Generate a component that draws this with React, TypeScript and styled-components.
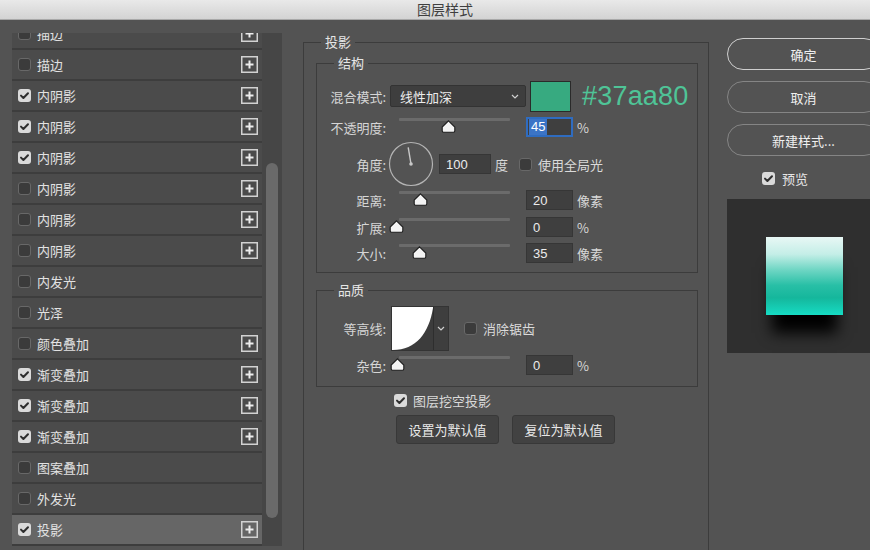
import React from "react";
import styled, { createGlobalStyle } from "styled-components";

const GlobalStyle = createGlobalStyle`
  html, body {
    margin: 0;
    padding: 0;
    background: #535353;
  }
  body {
    font-family: "Noto Sans CJK SC", "Liberation Sans", sans-serif;
    color: #dcdcdc;
  }
`;

type Layer = { name: string; checked: boolean; plus: boolean; selected?: boolean };

const layers: Layer[] = [
    { name: "描边", checked: false, plus: true },
    { name: "描边", checked: false, plus: true },
    { name: "内阴影", checked: true, plus: true },
    { name: "内阴影", checked: true, plus: true },
    { name: "内阴影", checked: true, plus: true },
    { name: "内阴影", checked: false, plus: true },
    { name: "内阴影", checked: false, plus: true },
    { name: "内阴影", checked: false, plus: true },
    { name: "内发光", checked: false, plus: false },
    { name: "光泽", checked: false, plus: false },
    { name: "颜色叠加", checked: false, plus: true },
    { name: "渐变叠加", checked: true, plus: true },
    { name: "渐变叠加", checked: true, plus: true },
    { name: "渐变叠加", checked: true, plus: true },
    { name: "图案叠加", checked: false, plus: false },
    { name: "外发光", checked: false, plus: false },
    { name: "投影", checked: true, plus: true, selected: true },
];

const CheckBox = ({ checked }: { checked: boolean }) => (
    <Box $checked={checked}>
        {checked && (
            <svg width="13" height="13" viewBox="0 0 13 13">
                <path d="M3 6.6 L5.4 9 L10 4.2" fill="none" stroke="#2e2e2e" strokeWidth="2" strokeLinecap="round" strokeLinejoin="round" />
            </svg>
        )}
    </Box>
);

const PlusIcon = () => (
    <PlusWrap>
        <svg width="17" height="17" viewBox="0 0 17 17">
            <rect x="0.75" y="0.75" width="15.5" height="15.5" fill="none" stroke="#d2d2d2" strokeWidth="1.5" />
            <path d="M8.5 4.5 V12.5 M4.5 8.5 H12.5" stroke="#ececec" strokeWidth="2" />
        </svg>
    </PlusWrap>
);

const Chevron = () => (
    <svg width="8" height="5" viewBox="0 0 8 5">
        <path d="M1 1 L4 4 L7 1" fill="none" stroke="#d0d0d0" strokeWidth="1.2" />
    </svg>
);

const Slider = ({ pos }: { pos: number }) => (
    <SliderWrap>
        <Track />
        <Thumb style={{ left: pos }}>
            <svg width="15" height="13" viewBox="0 0 15 13">
                <path d="M7.5 0.8 L13.8 7 V10.8 Q13.8 12.2 12.4 12.2 H2.6 Q1.2 12.2 1.2 10.8 V7 Z" fill="#f4f4f4" stroke="#1c1c1c" strokeWidth="1.1" />
            </svg>
        </Thumb>
    </SliderWrap>
);

const Dial = () => (
    <DialWrap>
        <svg width="46" height="46" viewBox="0 0 46 46">
            <circle cx="23" cy="23" r="21.5" fill="none" stroke="#b4b4b4" strokeWidth="1.2" />
            <path d="M23 23 L20.2 6.4" stroke="#c8c8c8" strokeWidth="1.4" />
            <circle cx="23" cy="23" r="1.8" fill="#c8c8c8" />
        </svg>
    </DialWrap>
);

const App = () => {
    return (
        <Window>
            <GlobalStyle />
            <TitleBar>图层样式</TitleBar>
            <Main>
                <LeftPanel>
                    <ListViewport>
                        <List>
                            {layers.map((l, i) => (
                                <LayerRow key={i} $selected={!!l.selected}>
                                    <CheckBox checked={l.checked} />
                                    <LayerName>{l.name}</LayerName>
                                    {l.plus && <PlusIcon />}
                                </LayerRow>
                            ))}
                        </List>
                    </ListViewport>
                    <ScrollTrack>
                        <ScrollThumb />
                    </ScrollTrack>
                </LeftPanel>

                <Center>
                    <OuterGroup>
                        <OuterLegend>投影</OuterLegend>
                        <InnerGroup>
                            <InnerLegend>结构</InnerLegend>
                            <Row $h={32}>
                                <Label>混合模式:</Label>
                                <Select>
                                    <span>线性加深</span>
                                    <Chevron />
                                </Select>
                                <Swatch />
                                <HexText>#37aa80</HexText>
                            </Row>
                            <Row $h={30}>
                                <Label>不透明度:</Label>
                                <Slider pos={42} />
                                <Input $focused>
                                    <Selected>45</Selected>
                                </Input>
                                <Unit>%</Unit>
                            </Row>
                            <Row $h={44}>
                                <Label>角度:</Label>
                                <Dial />
                                <AngleInput>100</AngleInput>
                                <Unit>度</Unit>
                                <CheckLabel $ml={11}>
                                    <CheckBox checked={false} />
                                    <span>使用全局光</span>
                                </CheckLabel>
                            </Row>
                            <Row $h={28}>
                                <Label>距离:</Label>
                                <Slider pos={14} />
                                <Input>20</Input>
                                <Unit>像素</Unit>
                            </Row>
                            <Row $h={26}>
                                <Label>扩展:</Label>
                                <Slider pos={-10} />
                                <Input>0</Input>
                                <Unit>%</Unit>
                            </Row>
                            <Row $h={26}>
                                <Label>大小:</Label>
                                <Slider pos={13} />
                                <Input>35</Input>
                                <Unit>像素</Unit>
                            </Row>
                        </InnerGroup>

                        <QualityGroup>
                            <InnerLegend>品质</InnerLegend>
                            <Row $h={43}>
                                <Label>等高线:</Label>
                                <ContourPicker>
                                    <svg width="41" height="43" viewBox="0 0 41 43">
                                        <rect width="41" height="43" fill="#ffffff" />
                                        <path d="M1 43 C24 43 37 26 41 1 L41 43 Z" fill="#3c3c3c" />
                                    </svg>
                                    <ContourArrow>
                                        <Chevron />
                                    </ContourArrow>
                                </ContourPicker>
                                <CheckLabel $ml={15}>
                                    <CheckBox checked={false} />
                                    <span>消除锯齿</span>
                                </CheckLabel>
                            </Row>
                            <Row $h={30}>
                                <Label>杂色:</Label>
                                <Slider pos={-9} />
                                <Input>0</Input>
                                <Unit>%</Unit>
                            </Row>
                        </QualityGroup>

                        <KnockoutRow>
                            <CheckLabel $ml={0}>
                                <CheckBox checked />
                                <span>图层挖空投影</span>
                            </CheckLabel>
                        </KnockoutRow>
                        <ButtonRow>
                            <FlatButton>设置为默认值</FlatButton>
                            <FlatButton>复位为默认值</FlatButton>
                        </ButtonRow>
                    </OuterGroup>
                </Center>

                <Right>
                    <PillButton $primary>确定</PillButton>
                    <PillButton>取消</PillButton>
                    <PillButton>新建样式...</PillButton>
                    <PreviewCheck>
                        <CheckBox checked />
                        <span>预览</span>
                    </PreviewCheck>
                    <Preview>
                        <Sample />
                    </Preview>
                </Right>
            </Main>
        </Window>
    );
};

export default App;

const Window = styled.div`
    width: 870px;
    height: 550px;
    overflow: hidden;
    background: #535353;
`;

const TitleBar = styled.div`
    height: 20px;
    box-sizing: border-box;
    padding-left: 20px;
    background: linear-gradient(#e9e9e9, #d3d3d3);
    border-bottom: 1px solid #a8a8a8;
    color: #3f3f3f;
    font-size: 14px;
    line-height: 19px;
    text-align: center;
`;

const Main = styled.div`
    display: flex;
    align-items: flex-start;
    padding-top: 13px;
`;

const LeftPanel = styled.div`
    display: flex;
    flex: none;
    margin-left: 12px;
    width: 270px;
    height: 513px;
    overflow: hidden;
    background: #464646;
`;

const ListViewport = styled.div`
    width: 250px;
    height: 100%;
    overflow: hidden;
`;

const List = styled.div`
    margin-top: -14px;
`;

const LayerRow = styled.div<{ $selected: boolean }>`
    display: flex;
    align-items: center;
    box-sizing: border-box;
    height: 31px;
    padding: 0 4px 0 6px;
    background: ${(p) => (p.$selected ? "#666666" : "#4b4b4b")};
    border-bottom: 2px solid #3d3d3d;
`;

const LayerName = styled.span`
    margin-left: 6px;
    font-size: 13px;
    color: #e2e2e2;
    flex: 1;
`;

const Box = styled.span<{ $checked: boolean }>`
    display: inline-flex;
    flex: none;
    width: 13px;
    height: 13px;
    box-sizing: border-box;
    border-radius: 3px;
    background: ${(p) => (p.$checked ? "#dadada" : "#3b3b3b")};
    border: ${(p) => (p.$checked ? "none" : "1px solid #686868")};
`;

const PlusWrap = styled.span`
    display: inline-flex;
    width: 17px;
    height: 17px;
`;

const ScrollTrack = styled.div`
    width: 20px;
    box-sizing: border-box;
    padding: 130px 4px 0;
`;

const ScrollThumb = styled.div`
    width: 12px;
    height: 355px;
    border-radius: 6px;
    background: #6a6a6a;
`;

const Center = styled.div`
    flex: none;
    margin-left: 21px;
    width: 406px;
`;

const OuterGroup = styled.fieldset`
    margin: 0;
    box-sizing: border-box;
    height: 560px;
    padding: 3px 10px 0 12px;
    border: 1px solid #3c3c3c;
    min-inline-size: 0;
`;

const OuterLegend = styled.legend`
    margin-left: 5px;
    padding: 0 4px;
    font-size: 13px;
    line-height: 18px;
    color: #e6e6e6;
`;

const InnerGroup = styled.fieldset`
    margin: 0;
    padding: 8px 0 6px 0;
    border: 1px solid #3c3c3c;
    min-inline-size: 0;
`;

const QualityGroup = styled(InnerGroup)`
    margin-top: 8px;
`;

const InnerLegend = styled.legend`
    margin-left: 17px;
    padding: 0 4px;
    font-size: 13px;
    line-height: 18px;
    color: #e6e6e6;
`;

const Row = styled.div<{ $h: number }>`
    display: flex;
    align-items: center;
    height: ${(p) => p.$h}px;
    font-size: 13px;
    color: #d8d8d8;
`;

const Label = styled.span`
    width: 69px;
    flex: none;
    text-align: right;
    font-size: 13px;
    color: #d6d6d6;
`;

const Select = styled.div`
    display: flex;
    align-items: center;
    justify-content: space-between;
    margin-left: 4px;
    width: 136px;
    height: 22px;
    box-sizing: border-box;
    padding: 0 6px 0 9px;
    background: #3e3e3e;
    border: 1px solid #333333;
    border-radius: 2px;
    color: #ececec;
    font-size: 13px;
`;

const Swatch = styled.div`
    margin-left: 4px;
    width: 41px;
    height: 31px;
    box-sizing: border-box;
    background: #37aa80;
    border: 1px solid #2a2a2a;
`;

const HexText = styled.span`
    margin-left: 11px;
    font-family: "Liberation Sans", sans-serif;
    font-size: 27px;
    color: #4fc497;
    letter-spacing: 0.2px;
`;

const SliderWrap = styled.div`
    position: relative;
    margin-left: 13px;
    width: 111px;
    height: 16px;
    align-self: center;
    margin-top: -2px;
`;

const Track = styled.div`
    height: 3px;
    border-radius: 1px;
    background: #6b6b6b;
`;

const Thumb = styled.div`
    position: absolute;
    top: 2px;
    width: 15px;
    height: 13px;
    display: flex;
`;

const Input = styled.div<{ $focused?: boolean }>`
    display: flex;
    align-items: center;
    margin-left: 16px;
    width: 47px;
    height: 20px;
    box-sizing: border-box;
    padding-left: ${(p) => (p.$focused ? "1px" : "6px")};
    background: #3f3f3f;
    border: ${(p) => (p.$focused ? "2px solid #2f6cc0" : "1px solid #363636")};
    font-family: "Liberation Sans", sans-serif;
    font-size: 13px;
    color: #ececec;
`;

const Selected = styled.span`
    background: #3b74c6;
    color: #ffffff;
    padding: 0 2px;
    line-height: 16px;
`;

const AngleInput = styled(Input)`
    margin-left: 5px;
    width: 52px;
`;

const Unit = styled.span`
    margin-left: 4px;
    font-size: 13px;
    color: #d8d8d8;
`;

const DialWrap = styled.div`
    display: flex;
    margin-left: 2px;
    width: 46px;
    height: 46px;
`;

const CheckLabel = styled.label<{ $ml: number }>`
    display: flex;
    align-items: center;
    gap: 6px;
    margin-left: ${(p) => p.$ml}px;
    font-size: 13px;
    color: #dadada;
`;

const ContourPicker = styled.div`
    display: flex;
    margin-left: 5px;
    border: 1px solid #343434;
`;

const ContourArrow = styled.div`
    display: flex;
    align-items: center;
    justify-content: center;
    width: 14px;
    background: #3e3e3e;
    border-left: 1px solid #2e2e2e;
`;

const KnockoutRow = styled.div`
    display: flex;
    align-items: center;
    height: 16px;
    margin: 5px 0 0 78px;
`;

const ButtonRow = styled.div`
    display: flex;
    gap: 13px;
    margin: 7px 0 0 80px;
`;

const FlatButton = styled.button`
    width: 103px;
    height: 29px;
    padding: 0;
    background: #424242;
    border: 1px solid #383838;
    border-radius: 3px;
    color: #e8e8e8;
    font-family: "Noto Sans CJK SC", sans-serif;
    font-size: 13px;
`;

const Right = styled.div`
    display: flex;
    flex-direction: column;
    flex: none;
    margin-left: 18px;
    margin-top: 5px;
    width: 153px;
`;

const PillButton = styled.button<{ $primary?: boolean }>`
    height: 32px;
    margin-bottom: 11px;
    padding: 0;
    background: transparent;
    border: 1.5px solid ${(p) => (p.$primary ? "#cfcfcf" : "#858585")};
    border-radius: 16px;
    color: #f0f0f0;
    font-family: "Noto Sans CJK SC", sans-serif;
    font-size: 13px;
`;

const PreviewCheck = styled.label`
    display: flex;
    align-items: center;
    gap: 7px;
    margin: 3px 0 0 35px;
    height: 16px;
    font-size: 13px;
    color: #e6e6e6;
`;

const Preview = styled.div`
    margin-top: 13px;
    height: 154px;
    box-sizing: border-box;
    padding: 38px 0 0 39px;
    background: #2f2f2f;
`;

const Sample = styled.div`
    width: 77px;
    height: 78px;
    background: linear-gradient(
        180deg,
        #e8f7f5 0%,
        #c4eee7 22%,
        #6fd6c4 42%,
        #28bfa6 62%,
        #15b79c 78%,
        #16dcc4 100%
    );
    box-shadow: 0 24px 14px -6px #000000;
`;
